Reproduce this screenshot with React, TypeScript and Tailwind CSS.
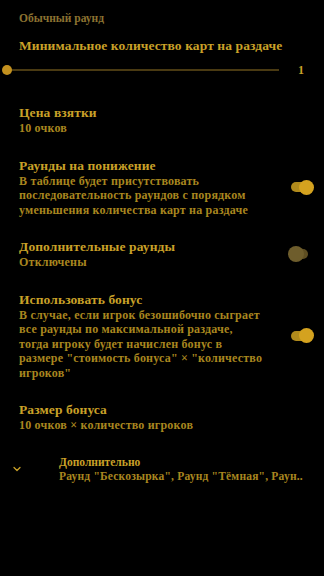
import { ChevronDown } from "lucide-react";

const font = { fontFamily: '"Liberation Serif", "DejaVu Serif", serif' };

type ToggleProps = { on: boolean };

const Toggle = ({ on }: ToggleProps) => (
  <div className="relative w-[28px] h-[16px] shrink-0">
    <div
      className={
        on
          ? "absolute left-[3px] top-[3px] w-[16px] h-[10px] rounded-full bg-[#b08a1c]"
          : "absolute left-[3px] top-[3px] w-[17px] h-[10px] rounded-full bg-[#5e4e22]"
      }
    />
    <div
      className={
        on
          ? "absolute left-[11px] top-[0.5px] w-[15px] h-[15px] rounded-full bg-[#d4a21f]"
          : "absolute left-0 top-0 w-[16px] h-[16px] rounded-full bg-[#6e5d2c]"
      }
    />
  </div>
);

type RowProps = {
  title: string;
  text: string;
  toggle?: boolean;
};

// text keeps its own line breaks, as on the device
const Row = ({ title, text, toggle }: RowProps) => (
  <div className="flex items-center justify-between pl-[19px] pr-[8px]">
    <div className="w-[250px]">
      <div className="text-[13.5px] leading-[16px] font-bold tracking-[0.1px] text-[#c9a128]">{title}</div>
      <div className="text-[12px] leading-[14.5px] font-bold tracking-[0.2px] text-[#a8861f] whitespace-pre-line">
        {text}
      </div>
    </div>
    {toggle !== undefined && <Toggle on={toggle} />}
  </div>
);

export default function App() {
  return (
    <div className="w-[324px] h-[576px] bg-black overflow-hidden" style={font}>
      <div className="pt-[11px] pl-[19px] text-[11.5px] leading-[14px] font-bold text-[#8b7231]">
        Обычный раунд
      </div>
      <div className="mt-[11.5px] pl-[19px] text-[13.5px] leading-[17px] font-bold tracking-[0.1px] text-[#c9a128]">
        Минимальное количество карт на раздаче
      </div>
      <div className="flex items-center mt-[9.5px] pl-[2px] pr-[20px] h-[14px]">
        <div className="relative flex-1 h-[14px] flex items-center">
          <div className="ml-[5px] w-[272px] h-[2px] bg-[#4a3a12]" />
          <div className="absolute left-0 top-[2px] w-[10px] h-[10px] rounded-full bg-[#c3911f]" />
        </div>
        <div className="text-[12px] font-bold text-[#c9a128]">1</div>
      </div>

      <div className="flex flex-col gap-[22px] mt-[28px]">
        <Row title="Цена взятки" text="10 очков" />
        <Row
          title="Раунды на понижение"
          text={"В таблице будет присутствовать\nпоследовательность раундов с порядком\nуменьшения количества карт на раздаче"}
          toggle={true}
        />
        <Row title="Дополнительные раунды" text="Отключены" toggle={false} />
        <Row
          title="Использовать бонус"
          text={'В случае, если игрок безошибочно сыграет\nвсе раунды по максимальной раздаче,\nтогда игроку будет начислен бонус в\nразмере "стоимость бонуса" × "количество\nигроков"'}
          toggle={true}
        />
        <Row title="Размер бонуса" text="10 очков × количество игроков" />
      </div>

      <div className="flex items-center mt-[22px] pl-[10px] pr-[8px]">
        <div className="w-[49px] shrink-0 pl-[1px]">
          <ChevronDown className="w-[12px] h-[12px] text-[#c9a128]" strokeWidth={2.5} />
        </div>
        <div className="min-w-0 flex-1">
          <div className="text-[11.5px] leading-[14px] font-bold text-[#c9a128]">Дополнительно</div>
          <div className="text-[11.5px] leading-[14px] font-bold tracking-[0.2px] text-[#a8861f] whitespace-nowrap overflow-hidden">
            {'Раунд "Бескозырка", Раунд "Тёмная", Раун..'}
          </div>
        </div>
      </div>
    </div>
  );
}
